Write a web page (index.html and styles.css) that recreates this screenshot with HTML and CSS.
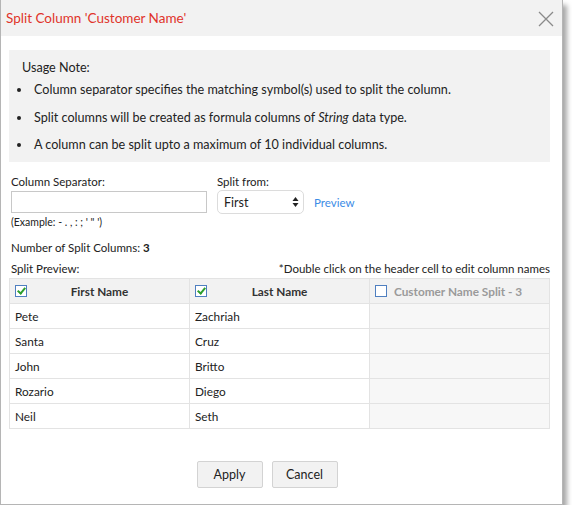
FILE: index.html
```html
<!DOCTYPE html>
<html lang="en">
<head>
  <meta charset="UTF-8" />
  <title>Split Column</title>
  <link rel="stylesheet" href="styles.css">
</head>
<body>
  <div class="dialog">
    <div class="dialog-header">
      <span class="dialog-title">Split Column 'Customer Name'</span>
      <svg class="close" width="16" height="16" viewBox="0 0 16 16">
        <path d="M1 1 L15 15 M15 1 L1 15" stroke="#8a8a8a" stroke-width="1.3" fill="none"/>
      </svg>
    </div>

    <div class="dialog-body">
      <div class="note">
        <div class="note-title">Usage Note:</div>
        <ul>
          <li>Column separator specifies the matching symbol(s) used to split the column.</li>
          <li>Split columns will be created as formula columns of <i>String</i> data type.</li>
          <li>A column can be split upto a maximum of 10 individual columns.</li>
        </ul>
      </div>

      <div class="form-row">
        <div class="field">
          <label>Column Separator:</label>
          <input type="text" class="sep-input">
          <div class="hint">(Example: - . , : ; ' " ')</div>
        </div>
        <div class="field">
          <label>Split from:</label>
          <div class="select-wrap">
            <div class="select">
              <span>First</span>
              <svg width="7" height="12" viewBox="0 0 7 12">
                <path d="M3.5 1 L6.5 5 L0.5 5 Z M3.5 11 L6.5 7 L0.5 7 Z" fill="#222"/>
              </svg>
            </div>
            <a class="preview-link">Preview</a>
          </div>
        </div>
      </div>

      <div class="count">Number of Split Columns: <b>3</b></div>

      <div class="preview-head">
        <span>Split Preview:</span>
        <span>*Double click on the header cell to edit column names</span>
      </div>

      <table class="preview">
        <thead>
          <tr>
            <th><span class="cb checked"></span>First Name</th>
            <th><span class="cb checked"></span>Last Name</th>
            <th class="off"><span class="cb"></span>Customer Name Split - 3</th>
          </tr>
        </thead>
        <tbody>
          <tr><td>Pete</td><td>Zachriah</td><td class="off"></td></tr>
          <tr><td>Santa</td><td>Cruz</td><td class="off"></td></tr>
          <tr><td>John</td><td>Britto</td><td class="off"></td></tr>
          <tr><td>Rozario</td><td>Diego</td><td class="off"></td></tr>
          <tr><td>Neil</td><td>Seth</td><td class="off"></td></tr>
        </tbody>
      </table>

      <div class="actions">
        <button>Apply</button>
        <button>Cancel</button>
      </div>
    </div>
  </div>
</body>
</html>
```

FILE: styles.css
```css
body {
  margin: 0;
  background: #fff;
  font-family: Lato, "Liberation Sans", sans-serif;
  color: #222;
}

.dialog {
  width: 561px;
  height: 504px;
  border: 1px solid #b5b5b5;
  border-top: none;
  background: #fff;
  box-shadow: 4px 5px 5px rgba(0, 0, 0, 0.35);
}

.dialog-header {
  height: 36px;
  background: #f2f2f2;
  display: flex;
  align-items: center;
  justify-content: space-between;
  padding: 0 8px 0 5px;
}

.dialog-title {
  color: #e0342a;
  font-size: 13.5px;
}

.close {
  margin-top: 1px;
}

.dialog-body {
  padding: 14px 12px 0 8px;
}

.note {
  background: #f2f2f2;
  padding: 10px 0 0 13px;
  font-size: 12.6px;
  height: 102px;
}

.note-title {
  line-height: 16px;
}

.note ul {
  margin: 0;
  padding-left: 12px;
}

.note li {
  line-height: 27.5px;
  list-style: none;
  position: relative;
}

.note li::before {
  content: "";
  position: absolute;
  left: -17px;
  top: 12px;
  width: 4px;
  height: 4px;
  border-radius: 50%;
  background: #222;
}

.form-row {
  display: flex;
  gap: 10px;
  margin-top: 13px;
  padding-left: 2px;
}

.field label {
  display: block;
  font-size: 11.5px;
  line-height: 14px;
  margin-bottom: 2px;
}

.sep-input {
  display: block;
  width: 196px;
  height: 22px;
  border: 1px solid #c8c8c8;
  box-sizing: border-box;
  margin: 0;
}

.hint {
  font-size: 10.5px;
  line-height: 12px;
  margin-top: 3px;
}

.select-wrap {
  display: flex;
  align-items: center;
  gap: 10px;
  margin-top: -1px;
}

.select {
  width: 87px;
  height: 24px;
  border: 1px solid #dcdcdc;
  border-radius: 5px;
  box-sizing: border-box;
  display: flex;
  align-items: center;
  justify-content: space-between;
  padding: 0 4px 0 6px;
  font-size: 12.5px;
}

.preview-link {
  color: #3c8ce6;
  font-size: 11.5px;
}

.count {
  font-size: 11.5px;
  line-height: 14px;
  margin-top: 13px;
  padding-left: 2px;
}

.preview-head {
  display: flex;
  justify-content: space-between;
  font-size: 11.5px;
  line-height: 14px;
  margin-top: 7px;
  padding-left: 2px;
}

.preview {
  width: 541px;
  border-collapse: collapse;
  margin-top: 2px;
  font-size: 11.8px;
  table-layout: fixed;
}

.preview th,
.preview td {
  border: 1px solid #e3e3e3;
  height: 24px;
  padding: 0 5px;
  text-align: left;
}

.preview th {
  background: #f2f2f2;
  font-weight: bold;
  text-align: center;
  color: #333;
  position: relative;
}

.preview th.off {
  color: #9a9a9a;
  text-align: left;
  padding-left: 24px;
}

.preview td.off {
  background: #f7f7f7;
}

.cb {
  position: absolute;
  left: 5px;
  top: 6px;
  width: 10px;
  height: 10px;
  border: 1px solid #4f7fc0;
  background: #fff;
}

.cb.checked::after {
  content: "";
  position: absolute;
  left: 3px;
  top: 0;
  width: 3px;
  height: 6px;
  border: solid #2e9e2e;
  border-width: 0 2px 2px 0;
  transform: rotate(40deg);
}

.actions {
  display: flex;
  justify-content: center;
  gap: 9px;
  margin-top: 32px;
  padding-right: 25px;
}

.actions button {
  width: 66px;
  height: 27px;
  background: #f2f2f2;
  border: 1px solid #d3d3d3;
  border-radius: 2px;
  font-family: inherit;
  font-size: 12.5px;
  color: #222;
}
```
